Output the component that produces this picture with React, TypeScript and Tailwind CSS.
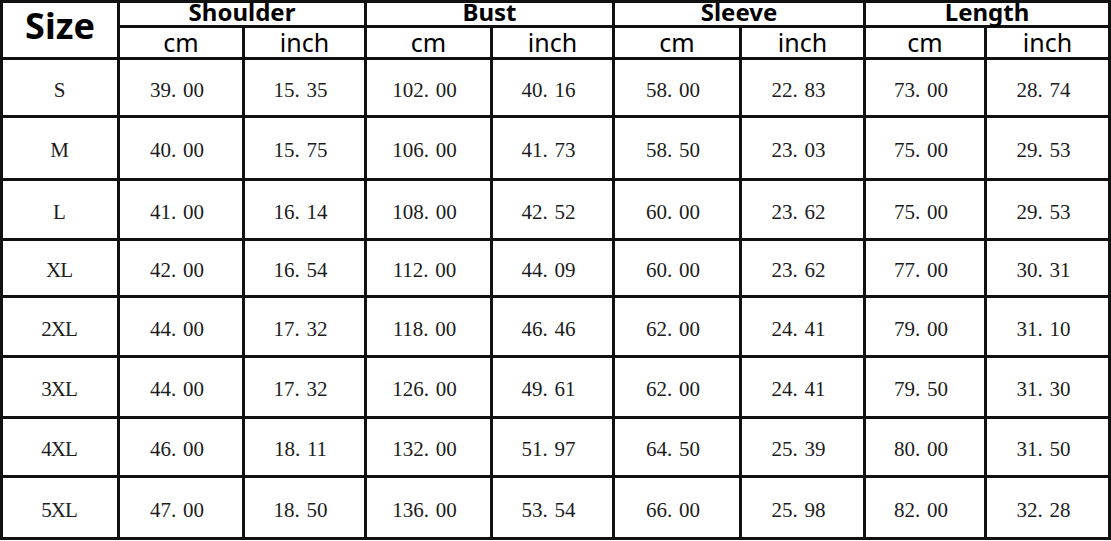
const groups = ["Shoulder", "Bust", "Sleeve", "Length"];

const rows: [string, string[]][] = [
  ["S", ["39.00", "15.35", "102.00", "40.16", "58.00", "22.83", "73.00", "28.74"]],
  ["M", ["40.00", "15.75", "106.00", "41.73", "58.50", "23.03", "75.00", "29.53"]],
  ["L", ["41.00", "16.14", "108.00", "42.52", "60.00", "23.62", "75.00", "29.53"]],
  ["XL", ["42.00", "16.54", "112.00", "44.09", "60.00", "23.62", "77.00", "30.31"]],
  ["2XL", ["44.00", "17.32", "118.00", "46.46", "62.00", "24.41", "79.00", "31.10"]],
  ["3XL", ["44.00", "17.32", "126.00", "49.61", "62.00", "24.41", "79.50", "31.30"]],
  ["4XL", ["46.00", "18.11", "132.00", "51.97", "64.50", "25.39", "80.00", "31.50"]],
  ["5XL", ["47.00", "18.50", "136.00", "53.54", "66.00", "25.98", "82.00", "32.28"]],
];

function Num({ value }: { value: string }) {
  const [whole, frac] = value.split(".");
  return (
    <span className="whitespace-nowrap">
      {whole}
      <span className="inline-block w-[12px] text-left">.</span>
      {frac}
    </span>
  );
}

const cell = "bg-white flex items-center justify-center pt-[6px]";

export default function App() {
  return (
    <div className="w-[1111px] h-[541px] bg-white">
      <div
        className="grid w-[1111px] grid-cols-[114px_122px_119px_123px_119px_124px_121px_118px_121px] grid-rows-[22px_29px_55px_60px_57px_54px_57px_58px_56px_59px] gap-[3px] bg-[#111] p-[3px] text-[#1c1c1c]"
        style={{ fontFamily: '"Liberation Serif", serif' }}
      >
        <div className="row-span-2 bg-white text-center font-['Noto_Sans',sans-serif] text-[36px] font-bold leading-[46px] text-black">
          Size
        </div>
        {groups.map((g) => (
          <div
            key={g}
            className="col-span-2 bg-white text-center font-['Noto_Sans',sans-serif] text-[24px] font-bold leading-[18px] text-black"
          >
            {g}
          </div>
        ))}
        {groups.map((g) => (
          <>
            <div
              key={g + "cm"}
              className="bg-white text-center font-['Noto_Sans',sans-serif] text-[25px] leading-[29px] text-black"
            >
              cm
            </div>
            <div
              key={g + "in"}
              className="bg-white text-center font-['Noto_Sans',sans-serif] text-[25px] leading-[29px] text-black"
            >
              inch
            </div>
          </>
        ))}
        {rows.map(([size, vals]) => (
          <>
            <div key={size} className={cell + " text-[21px] tracking-[-1px] pr-[2px]"}>
              {size}
            </div>
            {vals.map((v, i) => (
              <div key={size + i} className={cell + " text-[21px] pr-[8px]"}>
                <Num value={v} />
              </div>
            ))}
          </>
        ))}
      </div>
    </div>
  );
}
